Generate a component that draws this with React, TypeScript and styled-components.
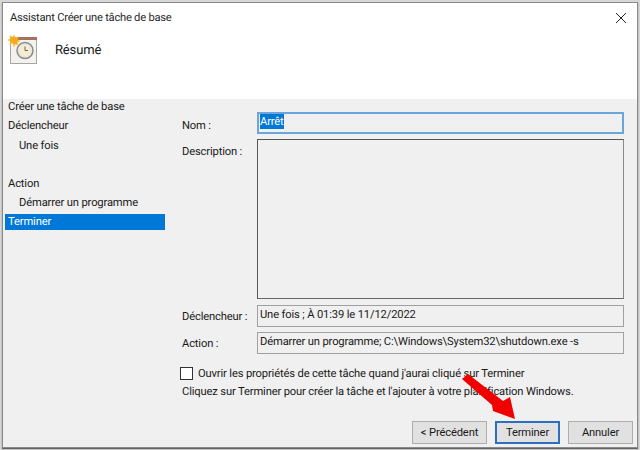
import React from 'react'
import styled, { createGlobalStyle } from 'styled-components'

const GlobalStyle = createGlobalStyle`
  html, body {
    margin: 0;
    padding: 0;
    background: #d6d6d6;
  }
  body {
    width: 640px;
    height: 450px;
    overflow: hidden;
    font-family: Roboto, "Open Sans", sans-serif;
    font-size: 11.2px;
    letter-spacing: -0.15px;
    text-rendering: geometricPrecision;
    color: #1a1a1a;
  }
`

const Frame = styled.div`
  position: relative;
  width: 640px;
  height: 450px;
  padding: 2px 2px 2px 2px;
  box-sizing: border-box;
`

const Win = styled.div`
  height: 100%;
  box-sizing: border-box;
  border: 1px solid #8a8a8a;
  box-shadow: 0 1px 1px #666;
  display: flex;
  flex-direction: column;
  background: #f0f0f0;
`

const Head = styled.header`
  height: 96px;
  flex: none;
  background: #fff;
  display: flex;
  flex-direction: column;
`

const TitleBar = styled.div`
  height: 29px;
  display: flex;
  align-items: center;
  justify-content: space-between;
  padding: 0 11px 0 7px;
  letter-spacing: -0.25px;
  color: #2a2a2a;
`

const Banner = styled.div`
  display: flex;
  align-items: flex-start;
  padding: 2px 0 0 3px;
  gap: 17px;
`

const Heading = styled.h1`
  margin: 7px 0 0;
  font-size: 13px;
  font-weight: 400;
  line-height: 20px;
`

const Body = styled.div`
  flex: 1;
  display: flex;
  min-height: 0;
`

const Side = styled.nav`
  width: 160px;
  flex: none;
  margin-left: 2px;
  display: flex;
  flex-direction: column;
`

const Step = styled.div<{ $sub?: boolean; $gap?: boolean }>`
  height: 19.3px;
  line-height: 15px;
  padding-left: ${p => (p.$sub ? 14 : 3)}px;
  margin-top: ${p => (p.$gap ? 19.3 : 0)}px;
  box-sizing: border-box;
`

const ActiveStep = styled.div`
  height: 16px;
  line-height: 15px;
  margin-top: -1px;
  padding-left: 3px;
  background: #0078d7;
  color: #fff;
`

const Main = styled.main`
  flex: 1;
  display: flex;
  flex-direction: column;
  padding: 13px 13px 0 17px;
  min-width: 0;
`

const Form = styled.div`
  display: grid;
  grid-template-columns: 75px 1fr;
  row-gap: 5px;
`

const Label = styled.label<{ $top?: number }>`
  padding-top: ${p => p.$top ?? 4}px;
  line-height: 15px;
`

const Field = styled.div`
  height: 22px;
  box-sizing: border-box;
  border: 1px solid #a0a0a0;
  background: #f0f0f0;
  padding: 1px 2px;
  line-height: 15px;
  white-space: nowrap;
`

const NameField = styled(Field)`
  border: 2px solid #6aa6dc;
  padding: 0 1px;
`

const Selected = styled.span`
  background: #0078d7;
  color: #fff;
  display: inline-block;
  height: 15px;
`

const Description = styled.div`
  height: 160px;
  margin-bottom: 1px;
  box-sizing: border-box;
  border: 1px solid #555;
  border-right-color: #888;
  border-bottom-color: #666;
  background: #f0f0f0;
`

const CheckRow = styled.div`
  display: flex;
  align-items: center;
  gap: 5px;
  margin: 12px 0 0 -2px;
  height: 14px;
`

const Box = styled.span`
  width: 11px;
  height: 11px;
  border: 1px solid #333;
  background: #fff;
  flex: none;
`

const Info = styled.p`
  margin: 4px 0 0;
  line-height: 15px;
  white-space: nowrap;
`

const Footer = styled.div`
  margin-top: auto;
  margin-right: -9px;
  margin-bottom: 3px;
  display: flex;
  justify-content: flex-end;
  gap: 8px;
`

const Btn = styled.button<{ $w: number; $primary?: boolean }>`
  width: ${p => p.$w}px;
  height: 23px;
  padding: 0;
  box-sizing: border-box;
  border: ${p => (p.$primary ? '2px solid #2a6fc0' : '1px solid #adadad')};
  background: #e1e1e1;
  font: inherit;
  letter-spacing: inherit;
  color: #1a1a1a;
`

const Arrow = styled.svg`
  position: absolute;
  left: 458px;
  top: 370px;
`

const ClockIcon = () => (
  <svg width="32" height="32" viewBox="0 0 32 32">
    <rect x="4.5" y="3.5" width="26" height="26" fill="#f4f2ee" stroke="#a9a5a0" />
    <rect x="4" y="3" width="27" height="3" fill="#a5725c" />
    <circle cx="19" cy="16.5" r="8" fill="#e8e6e2" stroke="#8d8b88" strokeWidth="1.5" />
    <circle cx="19" cy="16.5" r="5.5" fill="#f6ecd0" />
    <path d="M19 12.5V16.5H22" fill="none" stroke="#666" strokeWidth="1" />
    <path
      d="M8 1l1.2 3 3-1.4-1 3.2 3 1.2-3 1.3 1 3-3-1.2L8 13l-1.3-3.9-3 1.2 1-3-3-1.3 3-1.2-1-3.2 3 1.4z"
      fill="#f7a81c"
      stroke="#f9d24a"
      strokeWidth="0.5"
    />
  </svg>
)

const App: React.FC = () => (
  <Frame>
    <GlobalStyle />
    <Win>
      <Head>
        <TitleBar>
          Assistant Créer une tâche de base
          <svg width="10" height="10" viewBox="0 0 10 10">
            <path d="M0 0L10 10M10 0L0 10" stroke="#222" strokeWidth="1" fill="none" />
          </svg>
        </TitleBar>
        <Banner>
          <ClockIcon />
          <Heading>Résumé</Heading>
        </Banner>
      </Head>
      <Body>
        <Side>
          <Step>Créer une tâche de base</Step>
          <Step>Déclencheur</Step>
          <Step $sub>Une fois</Step>
          <Step $gap>Action</Step>
          <Step $sub>Démarrer un programme</Step>
          <ActiveStep>Terminer</ActiveStep>
        </Side>
        <Main>
          <Form>
            <Label $top={6}>Nom :</Label>
            <NameField>
              <Selected>Arrêt</Selected>
            </NameField>
            <Label $top={5}>Description :</Label>
            <Description />
            <Label>Déclencheur :</Label>
            <Field>Une fois ; À 01:39 le 11/12/2022</Field>
            <Label>Action :</Label>
            <Field>Démarrer un programme; C:\Windows\System32\shutdown.exe -s</Field>
          </Form>
          <CheckRow>
            <Box />
            Ouvrir les propriétés de cette tâche quand j'aurai cliqué sur Terminer
          </CheckRow>
          <Info>Cliquez sur Terminer pour créer la tâche et l'ajouter à votre planification Windows.</Info>
          <Footer>
            <Btn $w={75}>&lt; Précédent</Btn>
            <Btn $w={65} $primary>Terminer</Btn>
            <Btn $w={65}>Annuler</Btn>
          </Footer>
        </Main>
      </Body>
    </Win>
    <Arrow width="64" height="54" viewBox="0 0 64 54">
      <path d="M4 9L10 4L45 31L52 27L57 49L35 41L34 35Z" fill="#f00000" />
    </Arrow>
  </Frame>
)

export default App
